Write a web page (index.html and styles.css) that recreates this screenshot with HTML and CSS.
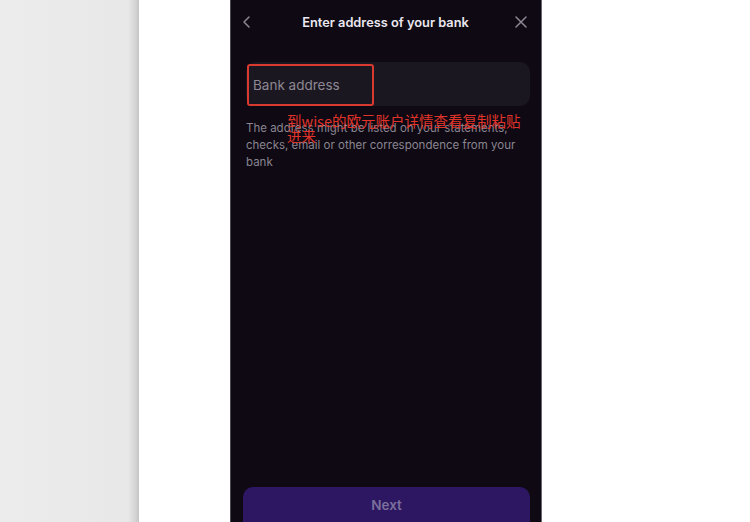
FILE: index.html
```
<!DOCTYPE html>
<html>
<head>
    <meta charset="utf-8" />
    <title>Enter address of your bank</title>
    <link rel="stylesheet" href="styles.css">
</head>
<body>
    <div class="stage">
        <div class="sidebar"></div>
        <div class="gap"></div>
        <div class="phone">
            <div class="header">
                <svg class="icon" width="14" height="14" viewBox="0 0 14 14">
                    <path d="M9 2 L4 7 L9 12" fill="none" stroke="#8c8794" stroke-width="1.5" stroke-linecap="round" stroke-linejoin="round" />
                </svg>
                <div class="title">Enter address of your bank</div>
                <svg class="icon" width="14" height="14" viewBox="0 0 14 14">
                    <path d="M2 2 L12 12 M12 2 L2 12" fill="none" stroke="#8c8794" stroke-width="1.5" stroke-linecap="round" />
                </svg>
            </div>

            <div class="field">
                <input class="inputbox" type="text" placeholder="Bank address" />
                <div class="mark"></div>
                <div class="note">到wise的欧元账户详情查看复制粘贴进来</div>
            </div>

            <p class="hint">The address might be listed on your statements, checks, email or other correspondence from your bank</p>

            <div class="spacer"></div>
            <button class="next">Next</button>
        </div>
        <div class="rest"></div>
    </div>
</body>
</html>
```

FILE: styles.css
```
* {
    box-sizing: border-box;
}

html, body {
    margin: 0;
    height: 100%;
    background-color: #ffffff;
    font-family: Inter, "Noto Sans", sans-serif;
}

.stage {
    display: flex;
    height: 522px;
    overflow: hidden;
}

.sidebar {
    width: 139px;
    background: linear-gradient(to right, #ececec 0, #e8e8e8 128px, #d2d2d2 136px, #c4c4c4 139px);
}

.gap {
    width: 91px;
    background-color: #ffffff;
}

.phone {
    width: 312px;
    display: flex;
    flex-direction: column;
    background-color: #0e0913;
    border-left: 1px solid #4c4852;
    border-right: 1px solid #6a6670;
}

.rest {
    flex: 1;
}

.header {
    height: 44px;
    display: flex;
    align-items: center;
    padding: 0 13px 0 9px;
}

.icon {
    flex: none;
}

.title {
    flex: 1;
    text-align: center;
    color: #ebe7ef;
    font-size: 12.8px;
    font-weight: 600;
    padding-left: 3px;
}

.field {
    position: relative;
    margin: 18px 11px 0 15px;
}

.inputbox {
    width: 100%;
    height: 44px;
    border: none;
    border-radius: 10px;
    background-color: #1b1721;
    color: #e6e2ea;
    font-family: Inter, "Noto Sans", sans-serif;
    font-size: 13.5px;
    padding: 2px 7px 0 7px;
    outline: none;
}

.inputbox::placeholder {
    color: #8d8893;
}

.mark {
    position: absolute;
    left: 1px;
    top: 2px;
    width: 127px;
    height: 42px;
    border: 2px solid #d93a30;
    border-radius: 3px;
}

.note {
    position: absolute;
    left: 41px;
    top: 51px;
    width: 240px;
    color: #e0342a;
    font-family: "Noto Sans CJK SC", sans-serif;
    font-size: 14.5px;
    line-height: 15px;
    z-index: 2;
}

.hint {
    margin: 14px 12px 0 15px;
    color: #8a8590;
    font-size: 11.5px;
    line-height: 17px;
}

.spacer {
    flex: 1;
}

.next {
    margin: 0 11px 0 12px;
    height: 35px;
    flex: none;
    border: none;
    border-radius: 10px 10px 0 0;
    background-color: #2d1763;
    color: #7b6f9b;
    font-family: Inter, "Noto Sans", sans-serif;
    font-size: 13.5px;
    font-weight: 600;
    padding-top: 2px;
}
```
